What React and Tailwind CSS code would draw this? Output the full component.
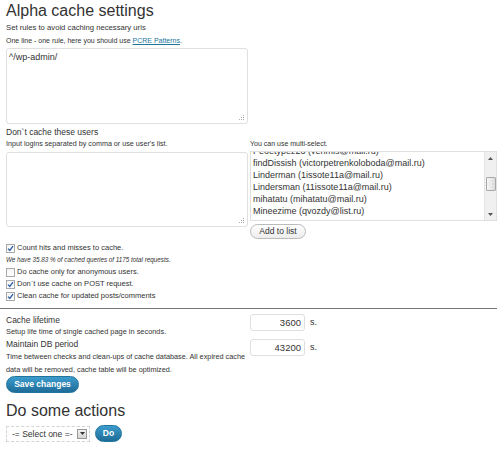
import { useState } from 'react';

const users = [
    'Peoetypez23 (vehmis@mail.ru)',
    'findDissish (victorpetrenkoloboda@mail.ru)',
    'Linderman (1issote11a@mail.ru)',
    'Lindersman (11issote11a@mail.ru)',
    'mihatatu (mihatatu@mail.ru)',
    'Mineezime (qvozdy@list.ru)',
];

function Check({ checked }) {
    return (
        <span className="w-[9px] h-[9px] shrink-0 border border-[#a9a9a9] bg-gradient-to-b from-[#f4f4f4] to-white flex items-center justify-center">
            {checked && (
                <svg width="7" height="7" viewBox="0 0 7 7">
                    <path d="M1 3.6 L2.8 5.4 L6 1.2" fill="none" stroke="#2a5aa8" strokeWidth="1.3" />
                </svg>
            )}
        </span>
    );
}

function Row({ checked, children }) {
    return (
        <label className="flex items-center gap-[2px] h-[12px] text-[7.5px] leading-[12px]">
            <Check checked={checked} />
            <span>{children}</span>
        </label>
    );
}

function Grip() {
    return (
        <svg className="absolute right-[3px] bottom-[3px]" width="6" height="6" viewBox="0 0 6 6">
            <rect x="4" y="0" width="1" height="1" fill="#aaa" />
            <rect x="2" y="2" width="1" height="1" fill="#aaa" />
            <rect x="4" y="2" width="1" height="1" fill="#aaa" />
            <rect x="0" y="4" width="1" height="1" fill="#aaa" />
            <rect x="2" y="4" width="1" height="1" fill="#aaa" />
            <rect x="4" y="4" width="1" height="1" fill="#aaa" />
        </svg>
    );
}

function App() {
    const [rules, setRules] = useState('^/wp-admin/');
    const [logins, setLogins] = useState('');

    return (
        <div className="w-[500px] h-[456px] overflow-hidden bg-white pl-[6px] text-[#333] font-['Liberation_Sans',Arial,sans-serif]">
            <h2 className="text-[16px] leading-[21px]">Alpha cache settings</h2>
            <p className="text-[7.7px] leading-[13px]">Set rules to avoid caching necessary urls</p>
            <p className="text-[7px] leading-[13px]">
                One line - one rule, here you should use{' '}
                <a href="#" className="text-[#21759b] underline">PCRE Patterns</a>.
            </p>
            <div className="relative mt-[1px] w-[242px] h-[76px]">
                <textarea
                    value={rules}
                    onChange={(e) => setRules(e.target.value)}
                    className="block w-full h-full resize-none border border-[#dfdfdf] rounded-[3px] px-[2px] pt-[3px] text-[9px] leading-[11px] outline-none"
                />
                <Grip />
            </div>

            <p className="mt-[2px] text-[8.5px] leading-[12px]">Don`t cache these users</p>
            <div className="flex">
                <div className="w-[244px]">
                    <p className="text-[7.2px] leading-[11px]">Input logins separated by comma or use user's list.</p>
                    <div className="relative mt-[3px] w-[242px] h-[75px]">
                        <textarea
                            value={logins}
                            onChange={(e) => setLogins(e.target.value)}
                            className="block w-full h-full resize-none border border-[#dfdfdf] rounded-[3px] outline-none"
                        />
                        <Grip />
                    </div>
                </div>
                <div className="w-[247px]">
                    <p className="text-[7px] leading-[11px]">You can use multi-select.</p>
                    <div className="mt-[2px] h-[70px] border border-[#dfdfdf] flex overflow-hidden">
                        <div className="flex-1 overflow-hidden pl-[2px]">
                            <div className="-mt-[7px]">
                                {users.map((u) => (
                                    <div key={u} className="h-[12px] text-[9px] leading-[12px] whitespace-nowrap">{u}</div>
                                ))}
                            </div>
                        </div>
                        <div className="w-[12px] bg-[#f0f0f0] border-l border-[#e4e4e4] flex flex-col items-center">
                            <div className="h-[12px] flex items-center justify-center">
                                <svg width="5" height="3" viewBox="0 0 5 3"><path d="M0 3 L2.5 0 L5 3Z" fill="#555" /></svg>
                            </div>
                            <div className="mt-[13px] w-[10px] h-[14px] border border-[#a8a8a8] rounded-[1px] bg-gradient-to-r from-[#f6f6f6] to-[#dcdcdc]" />
                            <div className="flex-1" />
                            <div className="h-[12px] flex items-center justify-center">
                                <svg width="5" height="3" viewBox="0 0 5 3"><path d="M0 0 L2.5 3 L5 0Z" fill="#555" /></svg>
                            </div>
                        </div>
                    </div>
                    <button className="block mt-[3px] h-[15px] w-[56px] rounded-full border border-[#bbb] bg-gradient-to-b from-white to-[#ececec] text-[8.5px] leading-[13px] text-[#333]">
                        Add to list
                    </button>
                </div>
            </div>

            <div className="mt-[3px]">
                <Row checked>Count hits and misses to cache.</Row>
                <p className="h-[12px] text-[6.3px] leading-[12px] italic">We have 35.83 % of cached queries of 1175 total requests.</p>
                <Row>Do cache only for anonymous users.</Row>
                <Row checked>Don`t use cache on POST request.</Row>
                <Row checked>Clean cache for updated posts/comments</Row>
            </div>

            <hr className="mt-[6px] -ml-[6px] w-[497px] border-0 border-t border-[#777]" />

            <div className="mt-[5px] flex">
                <div className="w-[244px]">
                    <p className="text-[8.5px] leading-[12px]">Cache lifetime</p>
                    <p className="text-[7.4px] leading-[11px]">Setup life time of single cached page in seconds.</p>
                </div>
                <div className="flex items-center gap-[5px] h-[17px]">
                    <input
                        defaultValue="3600"
                        className="w-[55px] h-[17px] border border-[#dfdfdf] rounded-[3px] text-right pr-[3px] text-[9.5px] outline-none"
                    />
                    <span className="text-[9px]">s.</span>
                </div>
            </div>
            <div className="mt-[1px] flex">
                <div className="w-[244px]">
                    <p className="text-[8.5px] leading-[12px]">Maintain DB period</p>
                    <p className="text-[7.3px] leading-[13px] whitespace-nowrap">
                        Time between checks and clean-ups of cache database. All expired cache<br />
                        data will be removed, cache table will be optimized.
                    </p>
                </div>
                <div className="mt-[1px] flex items-center gap-[5px] h-[17px]">
                    <input
                        defaultValue="43200"
                        className="w-[55px] h-[17px] border border-[#dfdfdf] rounded-[3px] text-right pr-[3px] text-[9.5px] outline-none"
                    />
                    <span className="text-[9px]">s.</span>
                </div>
            </div>

            <button className="block h-[17px] w-[73px] rounded-full border border-[#21759b] bg-gradient-to-b from-[#3c9ccd] to-[#1e6c98] text-white font-bold text-[8.5px] leading-[15px]">
                Save changes
            </button>

            <h2 className="mt-[8px] text-[16px] leading-[20px]">Do some actions</h2>
            <div className="mt-[4px] flex items-center gap-[5px]">
                <div className="w-[84px] h-[16px] border border-dashed border-[#d4d4d4] flex items-center pl-[5px] pr-[2px]">
                    <span className="flex-1 text-[8.5px] leading-[14px]">-= Select one =-</span>
                    <span className="w-[10px] h-[10px] border border-[#999] bg-gradient-to-b from-[#f0f0f0] to-[#d4d4d4] flex items-center justify-center">
                        <svg width="5" height="3" viewBox="0 0 5 3"><path d="M0 0 L2.5 3 L5 0Z" fill="#333" /></svg>
                    </span>
                </div>
                <button className="h-[17px] w-[27px] rounded-full border border-[#21759b] bg-gradient-to-b from-[#3c9ccd] to-[#1e6c98] text-white font-bold text-[8.5px] leading-[15px]">
                    Do
                </button>
            </div>
        </div>
    );
}

export default App;
